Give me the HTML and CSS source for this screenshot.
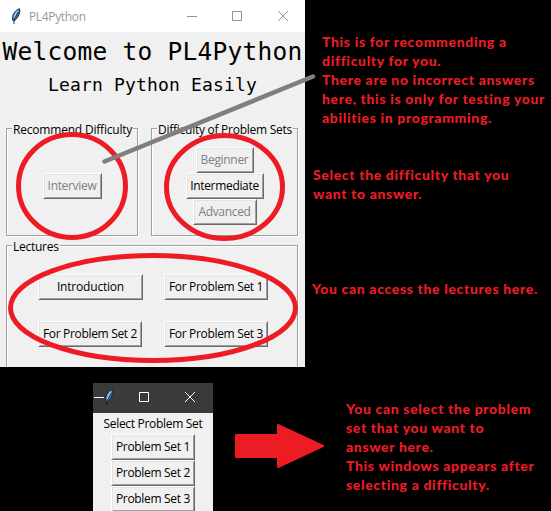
FILE: index.html
```html
<!DOCTYPE html>
<html lang="en">
<head>
<meta charset="utf-8">
<title>PL4Python</title>
<link rel="stylesheet" href="styles.css">
</head>
<body>
<svg class="defs" width="0" height="0">
  <symbol id="feather" viewBox="0 0 10 17">
    <path d="M8.600 .8C6 1.200 2.600 4.500 1.800 8.200L1.500 12L3 13L5.800 10.500C8 7.500 9.300 4 8.600 .8Z" fill="#4a8ad4" stroke="#1b2632" stroke-width="1"/>
    <path d="M6.800 2.500C5 4.500 3.600 7.500 3.200 10" fill="none" stroke="#9ccbf5" stroke-width="1.200"/>
    <path d="M7.600 4C6 7 4 10 3 12V16" fill="none" stroke="#111" stroke-width=".8"/>
  </symbol>
</svg>
<div class="stage">
  <main class="windows">
    <section class="window">
      <header class="titlebar">
        <svg class="feather"><use href="#feather"/></svg>
        <span class="title">PL4Python</span>
        <svg class="controls" width="103" height="12" fill="none" stroke="#929292"><path d="M0 6.500H10M45.500 1.500H54.500V10.500H45.500ZM91 1L101 11M101 1L91 11"/></svg>
      </header>
      <div class="content">
        <h1>Welcome to PL4Python</h1>
        <h2>Learn Python Easily</h2>
        <div class="groups">
          <div class="group recommend">
            <span class="legend wide">Recommend Difficulty</span>
            <button class="btn interview" disabled>Interview</button>
          </div>
          <div class="group difficulty">
            <span class="legend">Difficulty of Problem Sets</span>
            <button class="btn beginner" disabled>Beginner</button>
            <button class="btn intermediate">Intermediate</button>
            <button class="btn advanced" disabled>Advanced</button>
          </div>
        </div>
        <div class="group lectures">
          <span class="legend">Lectures</span>
          <button class="btn intro">Introduction</button>
          <button class="btn set">For Problem Set 1</button>
          <button class="btn set second">For Problem Set 2</button>
          <button class="btn set">For Problem Set 3</button>
        </div>
      </div>
    </section>
    <section class="popup">
      <header class="popup-bar">
        <svg width="120" height="30" fill="none" stroke="#fff"><path d="M1 14.500H11M46.500 9.500H55.500V18.500H46.500ZM92 9L102 19M102 9L92 19"/><use href="#feather" x="11" y="6" width="10" height="17" stroke="none"/></svg>
      </header>
      <div class="popup-body">
        <span class="popup-label">Select Problem Set</span>
        <button class="btn problem">Problem Set 1</button>
        <button class="btn problem">Problem Set 2</button>
        <button class="btn problem">Problem Set 3</button>
      </div>
    </section>
  </main>
  <aside class="notes">
    <p class="note n1">This is for recommending a<br>difficulty for you.<br>There are no incorrect answers<br>here, this is only for testing your<br>abilities in programming.</p>
    <p class="note n2">Select the difficulty that you<br>want to answer.</p>
    <p class="note n3">You can access the lectures here.</p>
    <p class="note n4">You can select the problem<br>set that you want to<br>answer here.<br>This windows appears after<br>selecting a difficulty.</p>
  </aside>
  <svg class="marks" width="551" height="511" fill="none" stroke="#ed1c24" stroke-width="5">
    <ellipse cx="72" cy="186" rx="53.500" ry="51.500"/>
    <ellipse cx="224.500" cy="187" rx="58" ry="51.500"/>
    <ellipse cx="153" cy="308" rx="142.500" ry="52.500"/>
    <path d="M104.500 161.500L313 76.500" stroke="#7f7f7f" stroke-width="4.500" stroke-linecap="round"/>
    <path d="M236 435H278V425L323 446L278 467V457H236Z" fill="#ed1c24" stroke-width="2" stroke-linejoin="round"/>
  </svg>
</div>
</body>
</html>
```
FILE: styles.css
```css
* { box-sizing: border-box; }
body { margin: 0; background: #000; font: 12px/16px "Open Sans", "Noto Sans", sans-serif; color: #000; }
.defs { position: absolute; }
.stage { position: relative; display: grid; grid-template-columns: 305px 246px; height: 511px; overflow: hidden; }
.windows { display: flex; flex-direction: column; gap: 16px; }
.window { height: 367px; overflow: hidden; background: #f0f0f0; }
.titlebar { display: flex; align-items: center; height: 32px; padding: 0 15px 0 11px; background: #fff; }
.feather { width: 10px; height: 17px; }
.title { margin: 2px auto 0 8px; color: #999; letter-spacing: -.35px; }
h1, h2 { margin: 0; font-family: "DejaVu Sans Mono", monospace; font-weight: 400; text-align: center; white-space: nowrap; }
h1 { padding-top: 5px; font-size: 24.500px; line-height: 30px; letter-spacing: .25px; }
h2 { padding-top: 6px; font-size: 18px; line-height: 24px; letter-spacing: .16px; }
.groups { display: grid; grid-template-columns: 132px 147px; gap: 13px; margin: 31px 6px 9px; }
.group { position: relative; border: 1px solid #a0a0a0; box-shadow: 1px 1px #fff, inset 1px 1px #fff; }
.recommend, .difficulty { display: flex; flex-direction: column; align-items: center; height: 108px; padding-top: 18px; }
.recommend { padding-top: 44px; }
.legend { position: absolute; top: -5px; left: 5px; padding: 0 1px; line-height: 12px; background: #f0f0f0; white-space: nowrap; letter-spacing: -.26px; }
.wide { letter-spacing: -.2px; }
.lectures { display: grid; grid-template-columns: 105px 104px; grid-auto-rows: 26px; gap: 21px; height: 150px; margin: 0 7px 0 6px; padding: 28px 0 0 31px; }
.btn { flex: none; width: 100%; height: 26px; padding: 0; border: solid 1px; border-color: #fff #696969 #696969 #fff; box-shadow: inset 1px 1px #e3e3e3, inset -1px -1px #a0a0a0; background: #f0f0f0; color: #000; font: inherit; letter-spacing: -.32px; white-space: nowrap; }
.btn:disabled { color: #808080; }
.intro { letter-spacing: -.2px; }
.second { width: 104px; }
.interview { width: 59px; }
.beginner { width: 58px; }
.intermediate { width: 78px; }
.advanced { width: 64px; }
.popup { width: 120px; margin-left: 93px; }
.popup-bar { height: 30px; background: #3a3a3a; }
.popup-body { display: flex; flex-direction: column; align-items: center; height: 99px; background: #f0f0f0; }
.popup-label { height: 21px; line-height: 21px; letter-spacing: -.3px; }
.problem { width: 84px; }
.notes { display: flex; flex-direction: column; }
.note { margin: 0; color: #ed1c24; font: 900 14px/19px Lato, sans-serif; letter-spacing: .65px; white-space: nowrap; }
.n1 { margin: 32px 0 38px 17px; }
.n2 { margin: 0 0 76px 8px; }
.n3 { margin: 0 0 101px 7px; }
.n4 { margin-left: 41px; }
.marks { position: absolute; top: 0; left: 0; pointer-events: none; }
```
